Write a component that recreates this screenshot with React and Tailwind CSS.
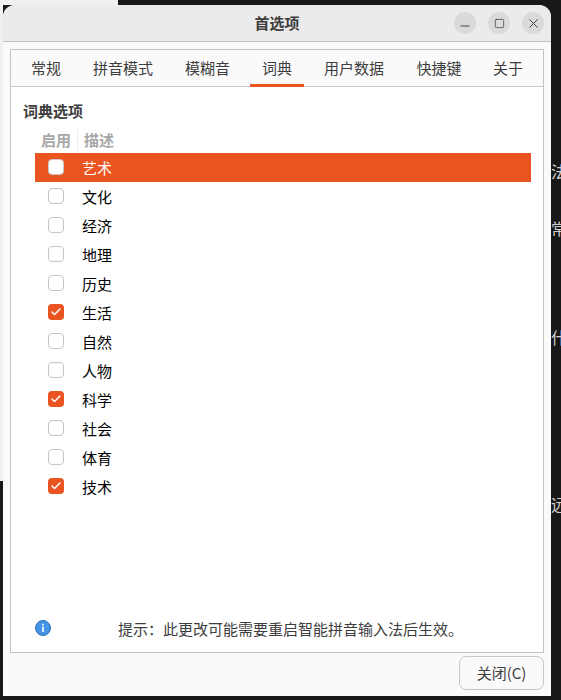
import React from "react";
import { Minus, Square, X, Check } from "lucide-react";

const tabs = [
  { label: "常规", w: "w-[70px]" },
  { label: "拼音模式", w: "w-[84px]" },
  { label: "模糊音", w: "w-[85px]" },
  { label: "词典", w: "w-[54px]", active: true },
  { label: "用户数据", w: "w-[100px]" },
  { label: "快捷键", w: "w-[70px]" },
  { label: "关于", w: "w-[68px]" },
];

const rows = [
  { label: "艺术", selected: true },
  { label: "文化" },
  { label: "经济" },
  { label: "地理" },
  { label: "历史" },
  { label: "生活", checked: true },
  { label: "自然" },
  { label: "人物" },
  { label: "科学", checked: true },
  { label: "社会" },
  { label: "体育" },
  { label: "技术", checked: true },
];

const font = "font-['Noto_Sans_CJK_SC','Noto_Sans',sans-serif]";

const App = () => {
  return (
    <div className={`relative w-[561px] h-[700px] overflow-hidden bg-[#181818] pt-[5px] pl-[3px] ${font}`}>
      {/* Desktop behind the dialog */}
      <div className="absolute left-0 top-0 w-[118px] h-[5px] bg-[#f0f0f0]" />
      <div className="absolute left-0 top-0 w-[3px] h-[481px] bg-[#f0f0f0]" />
      <span className="absolute left-[551px] top-[161px] text-[16px] leading-5 text-[#d0d0d0]">法</span>
      <span className="absolute left-[551px] top-[218px] text-[16px] leading-5 text-[#d0d0d0]">常</span>
      <span className="absolute left-[551px] top-[327px] text-[16px] leading-5 text-[#d0d0d0]">什</span>
      <span className="absolute left-[551px] top-[494px] text-[16px] leading-5 text-[#d0d0d0]">远</span>

      {/* Dialog */}
      <div className="relative w-[548px] h-[691px] flex flex-col rounded-t-[12px] overflow-hidden bg-[#fafafa]">
        {/* Title bar */}
        <div className="relative h-[37px] shrink-0 flex items-center justify-center bg-[#ebebeb] border-b border-[#c0c0c0]">
          <span className="text-[15px] font-bold text-[#3d3d3d]">首选项</span>
          <div className="absolute right-[7px] top-[7px] flex gap-[12px]">
            <div className="w-[22px] h-[22px] rounded-full bg-[#dadada] flex items-center justify-center text-[#333]">
              <Minus size={14} strokeWidth={1.5} className="translate-y-[3px]" />
            </div>
            <div className="w-[22px] h-[22px] rounded-full bg-[#dadada] flex items-center justify-center text-[#333]">
              <Square size={11} strokeWidth={1.5} />
            </div>
            <div className="w-[22px] h-[22px] rounded-full bg-[#dadada] flex items-center justify-center text-[#333]">
              <X size={15} strokeWidth={1.5} />
            </div>
          </div>
        </div>

        {/* Notebook */}
        <div className="mt-[7px] ml-[7px] w-[534px] h-[604px] shrink-0 flex flex-col border border-[#c4c4c4] bg-white">
          <div className="h-[37px] shrink-0 flex bg-[#fafafa] border-b border-[#c8c8c8]">
            {tabs.map((tab) => (
              <div
                key={tab.label}
                className={`${tab.w} h-[37px] shrink-0 flex items-center justify-center text-[15px] text-[#3d3d3d] ${
                  tab.active ? "border-b-[3px] border-[#e95420] pt-[3px]" : ""
                }`}
              >
                {tab.label}
              </div>
            ))}
          </div>

          <div className="flex-1 flex flex-col">
            <div className="pl-[12px] pt-[13px] h-[38px] text-[15px] leading-[22px] font-bold text-[#3d3d3d]">词典选项</div>

            {/* List */}
            <div className="ml-[24px] w-[496px] mt-[5px]">
              <div className="h-[23px] flex items-center text-[15px] font-bold text-[#a8a8a8] pb-[2px]">
                <div className="w-[43px] pl-[6px] border-r border-[#ececec] h-full flex items-center">启用</div>
                <div className="pl-[6px]">描述</div>
              </div>
              {rows.map((row) => (
                <div
                  key={row.label}
                  className={`h-[29px] flex items-center text-[15px] ${
                    row.selected ? "bg-[#e95420] text-white" : "text-black"
                  }`}
                >
                  <div className="w-[47px] pl-[13px] shrink-0 -mt-[1px]">
                    {row.checked ? (
                      <div className="w-[16px] h-[16px] rounded-[4px] bg-[#e95420] flex items-center justify-center">
                        <Check size={12} strokeWidth={3} className="text-white" />
                      </div>
                    ) : (
                      <div className="w-[16px] h-[16px] rounded-[4px] border border-[#c6c6c6] bg-white" />
                    )}
                  </div>
                  <span className="pt-[2px]">{row.label}</span>
                </div>
              ))}
            </div>

            {/* Hint */}
            <div className="mt-auto mb-[13px] ml-[24px] flex items-center h-[20px]">
              <svg width="16" height="16" viewBox="0 0 16 16" className="shrink-0 -mt-[3px]">
                <circle cx="8" cy="8" r="7.5" fill="#4496e4" stroke="#2c6eb0" strokeWidth="1" />
                <rect x="7.2" y="6.5" width="1.6" height="5.5" fill="#fff" />
                <rect x="7.2" y="3.8" width="1.6" height="1.6" fill="#fff" />
              </svg>
              <span className="ml-[67px] text-[15px] text-[#3d3d3d] whitespace-nowrap">提示：此更改可能需要重启智能拼音输入法后生效。</span>
            </div>
          </div>
        </div>

        {/* Footer */}
        <div className="flex justify-end mt-[3px] mr-[7px]">
          <button className="w-[85px] h-[34px] rounded-[7px] border border-[#c8c8c8] bg-[#fafafa] text-[15px] text-[#3d3d3d]">
            关闭(C)
          </button>
        </div>
      </div>
    </div>
  );
};

export default App;
